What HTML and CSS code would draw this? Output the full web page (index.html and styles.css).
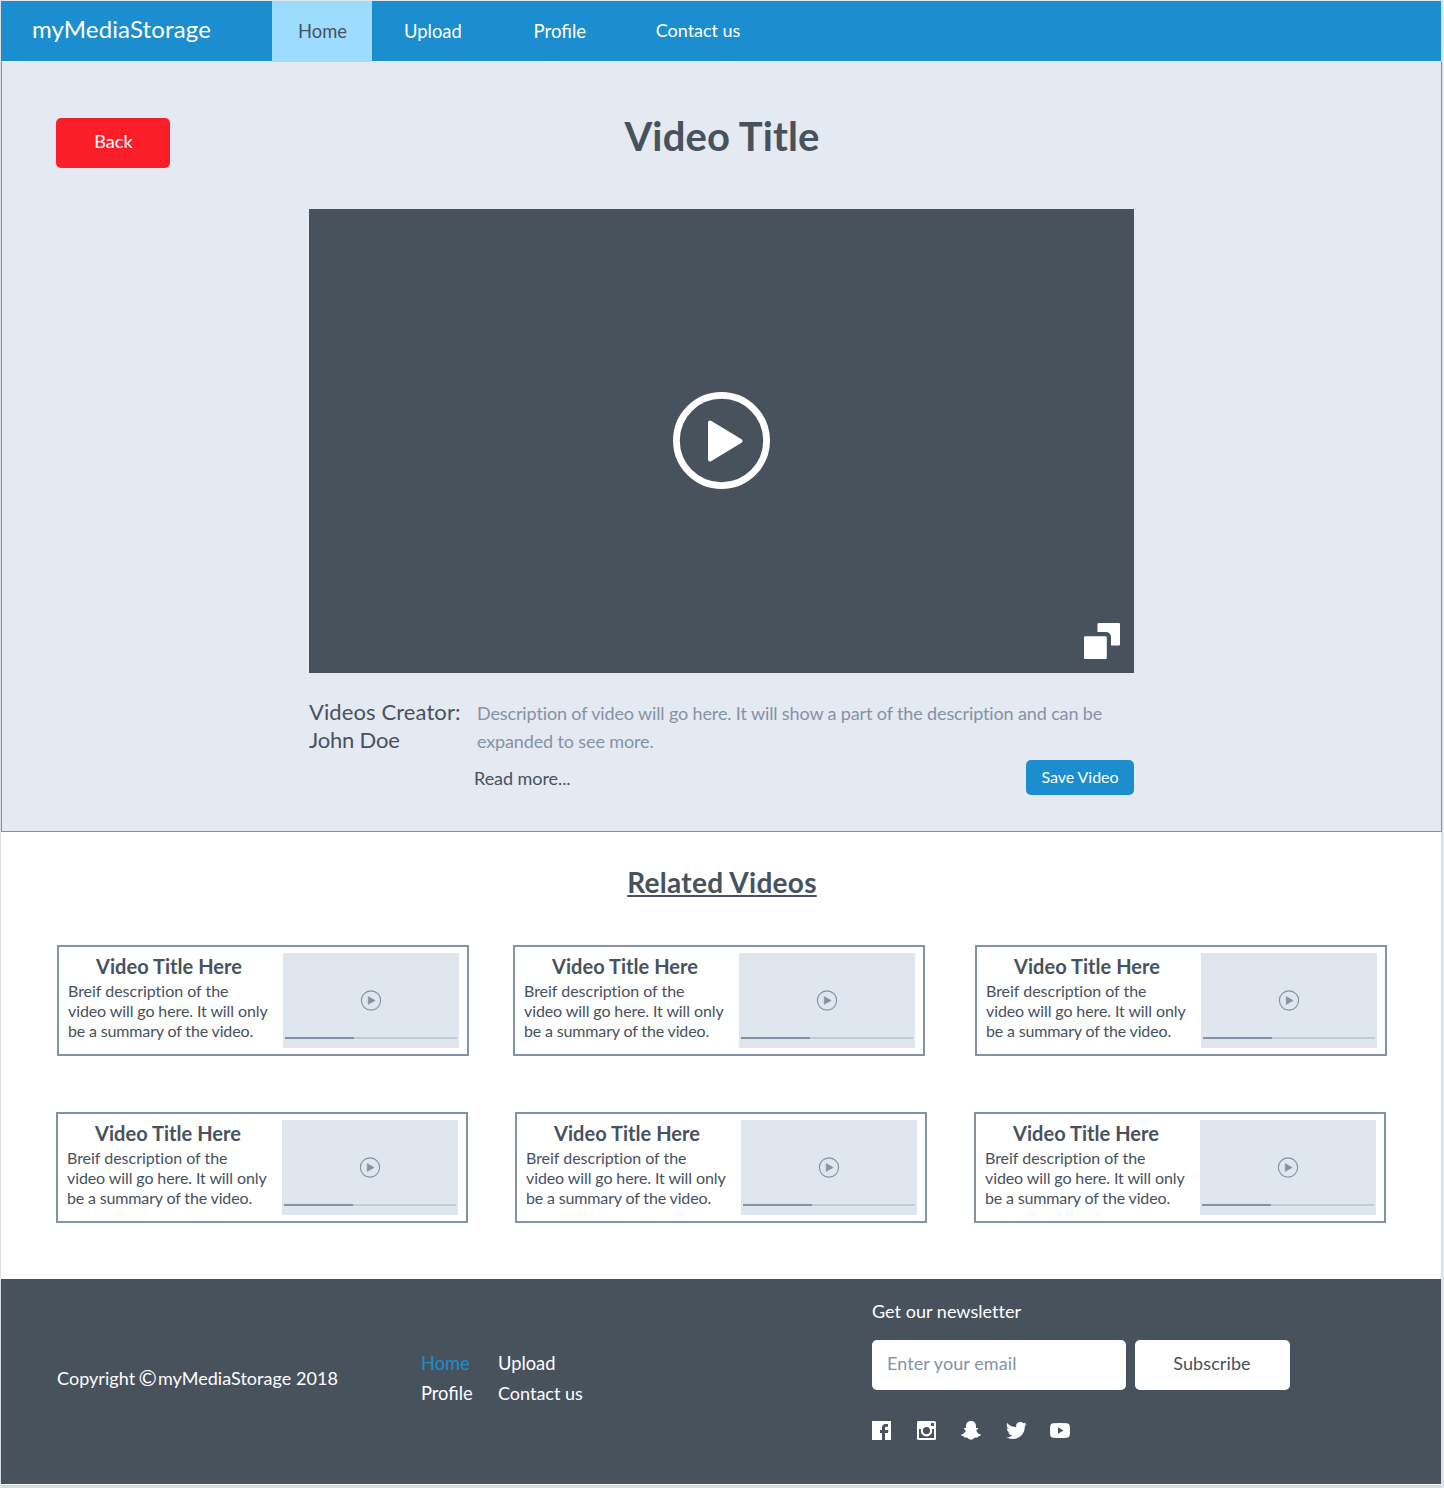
FILE: index.html
```html
<!DOCTYPE html>
<html lang="en">
<head>
<meta charset="utf-8">
<title>myMediaStorage</title>
<link rel="stylesheet" href="styles.css">
</head>
<body>
<svg class="defs" width="0" height="0" aria-hidden="true">
  <symbol id="thumb-play" viewBox="0 0 22 21">
    <circle cx="11" cy="10.500" r="9.600" fill="none" stroke="#8492a6" stroke-width="1.150"/>
    <path d="M8.200 6.500v8l7-4z" fill="#8492a6" stroke="#8492a6" stroke-width=".5" stroke-linejoin="round"/>
  </symbol>
</svg>
<div class="page">
  <header class="topbar">
    <div class="brand">myMediaStorage</div>
    <nav class="tabs">
      <a class="tab tab-active">Home</a>
      <a class="tab">Upload</a>
      <a class="tab tab-profile">Profile</a>
      <a class="tab tab-contact">Contact us</a>
    </nav>
  </header>

  <main>
    <section class="hero">
      <div class="hero-head">
        <button class="back">Back</button>
        <h1>Video Title</h1>
      </div>
      <div class="player">
        <svg class="play" width="97" height="97" viewBox="0 0 97 97">
          <circle cx="48.500" cy="48.500" r="45.100" fill="none" stroke="#fff" stroke-width="6.800"/>
          <path d="M37 30.500v37L67.500 49z" fill="#fff" stroke="#fff" stroke-width="4" stroke-linejoin="round"/>
        </svg>
        <svg class="expand" width="36" height="36" viewBox="0 0 36 36" fill="#fff">
          <path d="M14.800 0H35a1 1 0 0 1 1 1v20.500a1 1 0 0 1-1 1h-8V14a5 5 0 0 0-5-5h-8.500V1.300A1.300 1.300 0 0 1 14.800 0z"/>
          <rect x="0" y="13.200" width="22.800" height="22.800" rx="1.300"/>
        </svg>
      </div>
      <div class="details">
        <p class="creator">Videos Creator:<br><span class="name">John Doe</span></p>
        <div class="about">
          <p class="description">Description of video will go here. It will show a part of the description and can be<br>expanded to see more.</p>
          <div class="actions">
            <a class="more">Read more...</a>
            <button class="save">Save Video</button>
          </div>
        </div>
      </div>
    </section>

    <section class="related">
      <h2>Related Videos</h2>
      <div class="row row-first">
        <article class="card"><div class="card-text"><h3>Video Title Here</h3><p>Breif description of the<br><span class="snug">video will go here. It will only</span><br><span class="snugger">be a summary of the video.</span></p></div><div class="thumb"><svg class="thumb-icon"><use href="#thumb-play"/></svg><div class="track"><div class="progress"></div></div></div></article>
        <article class="card"><div class="card-text"><h3>Video Title Here</h3><p>Breif description of the<br><span class="snug">video will go here. It will only</span><br><span class="snugger">be a summary of the video.</span></p></div><div class="thumb"><svg class="thumb-icon"><use href="#thumb-play"/></svg><div class="track"><div class="progress"></div></div></div></article>
        <article class="card"><div class="card-text"><h3>Video Title Here</h3><p>Breif description of the<br><span class="snug">video will go here. It will only</span><br><span class="snugger">be a summary of the video.</span></p></div><div class="thumb"><svg class="thumb-icon"><use href="#thumb-play"/></svg><div class="track"><div class="progress"></div></div></div></article>
      </div>
      <div class="row row-second">
        <article class="card"><div class="card-text"><h3>Video Title Here</h3><p>Breif description of the<br><span class="snug">video will go here. It will only</span><br><span class="snugger">be a summary of the video.</span></p></div><div class="thumb"><svg class="thumb-icon"><use href="#thumb-play"/></svg><div class="track"><div class="progress"></div></div></div></article>
        <article class="card"><div class="card-text"><h3>Video Title Here</h3><p>Breif description of the<br><span class="snug">video will go here. It will only</span><br><span class="snugger">be a summary of the video.</span></p></div><div class="thumb"><svg class="thumb-icon"><use href="#thumb-play"/></svg><div class="track"><div class="progress"></div></div></div></article>
        <article class="card"><div class="card-text"><h3>Video Title Here</h3><p>Breif description of the<br><span class="snug">video will go here. It will only</span><br><span class="snugger">be a summary of the video.</span></p></div><div class="thumb"><svg class="thumb-icon"><use href="#thumb-play"/></svg><div class="track"><div class="progress"></div></div></div></article>
      </div>
    </section>
  </main>

  <footer class="footer">
    <p class="copyright"><span>Copyright</span><span class="mark">©</span><span>myMediaStorage 2018</span></p>
    <nav class="footer-links">
      <a class="wide current">Home</a>
      <a class="wide">Upload</a>
      <a class="wide">Profile</a>
      <a>Contact us</a>
    </nav>
    <div class="newsletter">
      <p class="newsletter-title">Get our newsletter</p>
      <form class="signup">
        <input class="email" type="email" placeholder="Enter your email">
        <button class="subscribe" type="button">Subscribe</button>
      </form>
      <div class="social">
        <svg width="19" height="19" viewBox="0 0 19 19" fill="#fff"><path d="M0 0h19v19h-6v-7h3l.4-3H13V7.200c0-.9.300-1.400 1.400-1.400h1.600V3.100c-.6-.1-1.300-.1-2.300-.1-2.300 0-3.700 1.300-3.700 3.700V9H8v3h2v7H0z"/></svg>
        <svg width="19" height="19" viewBox="0 0 19 19" fill="#fff"><path fill-rule="evenodd" d="M1.500 0h16A1.500 1.500 0 0 1 19 1.500v16a1.500 1.500 0 0 1-1.500 1.500h-16A1.500 1.500 0 0 1 0 17.500v-16A1.500 1.500 0 0 1 1.500 0zM14.500 2a.5.5 0 0 0-.5.500v2a.5.5 0 0 0 .5.500h2a.5.5 0 0 0 .5-.5v-2a.5.5 0 0 0-.5-.5zM2 8v8.500a.5.5 0 0 0 .5.500h14a.5.5 0 0 0 .5-.5V8h-2q.2.800.2 1.700a5.700 5.700 0 0 1-11.400 0Q3.800 8.800 4 8zM9.500 6a3.600 3.600 0 1 0 0 7.200 3.600 3.600 0 0 0 0-7.200z"/></svg>
        <svg width="20" height="19" viewBox="0 0 20 19" fill="#fff"><path d="M10 0c2.800 0 5 2 5 5v2c.7.200 1.500-.3 2 .2.500.7-.3 1.200-1.300 1.700-.6.300-.4.800 0 1.500.8 1.500 2 2.600 3.700 3 .6.200.8.700.2 1.100-.7.500-1.700.6-2.300.8-.3.300-.1.900-.5 1.100-.7.300-1.900-.2-3 .3-1.200.600-2 1.900-3.800 1.900s-2.600-1.300-3.800-1.900c-1.100-.5-2.300 0-3-.3-.4-.2-.2-.8-.5-1.100-.6-.2-1.600-.3-2.300-.8-.6-.4-.4-.9.200-1.100 1.700-.4 2.900-1.500 3.700-3 .4-.7.600-1.200 0-1.500-1-.5-1.800-1-1.300-1.700.5-.5 1.300 0 2-.2V5c0-3 2.200-5 5-5z"/></svg>
        <svg width="21" height="18" viewBox="0 0 21 18" fill="#fff"><path d="M1.300 1.100C3.300 3.600 6.300 5 10.300 5.200 9.500 2 11.700 0 14.300 0c1.300 0 2.400.500 3.100 1.300.9-.1 1.800-.5 2.700-1-.3.900-.9 1.700-1.700 2.200.9 0 1.700-.3 2.400-.6-.6.900-1.200 1.600-2 2.200C19 10.500 14.800 17 6.600 17c-2.400 0-4.600-.6-6.400-1.900 2.200.2 4.400-.3 6-1.700-1.900-.1-3.300-1.200-3.900-2.900.6.100 1.200.1 1.800-.1C2.100 9.900.8 8.300.8 6.200c.6.400 1.200.5 1.800.5C.8 5.300.2 3 1.300 1.100z"/></svg>
        <svg width="20" height="15" viewBox="0 0 20 15" fill="#fff"><path fill-rule="evenodd" d="M3 .300Q10-.3 17 .300q2.600.200 2.800 2.700.3 4.500 0 9-.2 2.500-2.800 2.700-7 .600-14 0Q.4 14.500.2 12q-.3-4.500 0-9Q.4.500 3 .300zM8 4.300v6.400l5.500-3.200z"/></svg>
      </div>
    </div>
  </footer>
</div>
</body>
</html>
```
FILE: styles.css
```css
* { box-sizing: border-box; }
body {
  margin: 0;
  padding: 1px 3px 4px 1px;
  background: #e9edf5;
  font-family: Lato, sans-serif;
  font-size: 18px;
  color: #47525d;
}
h1, h2, h3, p { margin: 0; }
button, input { font: inherit; border: 0; padding: 0; margin: 0; }
.defs { display: block; position: absolute; }

.page {
  width: 1440px;
  height: 1484px;
  background: #fff;
  box-shadow: 0 2px 3px 1px rgba(71, 82, 93, .16);
}

/* Top bar */
.topbar { display: flex; height: 60px; background: #1c8dce; color: #fff; }
.brand {
  width: 271px;
  padding-left: 31px;
  font-size: 24px;
  line-height: 55px;
  letter-spacing: .13px;
}
.tabs { display: grid; grid-template-columns: 100px 132px 122px auto; height: 61px; }
.tab { line-height: 61px; padding-left: 32px; font-size: 18.400px; }
.tab-active {
  position: relative;
  z-index: 1;
  padding-left: 26px;
  background: #9ddcff;
  color: #47525d;
}
.tab-profile { padding-left: 29.600px; font-size: 18.600px; }
.tab-contact { padding-left: 29.800px; line-height: 59px; font-size: 18px; letter-spacing: -.04px; }

/* Featured video */
.hero {
  width: 1441px;
  height: 771px;
  padding: 56px 307px 0;
  background: #e4e9f2;
  border: 1px solid #8190a5;
  border-top-color: #e4e9f2;
}
.hero-head {
  display: grid;
  grid-template-columns: 253px 1fr 253px;
  margin: 0 -253px;
  height: 91px;
}
.back {
  width: 114px;
  height: 50px;
  padding: 0 0 4px 1px;
  border-radius: 5px;
  background: #fa1e28;
  color: #fff;
  font-size: 18.200px;
}
h1 { padding-left: 1px; text-align: center; font-size: 40px; line-height: 36px; letter-spacing: .13px; }
.player {
  position: relative;
  display: grid;
  place-content: start;
  padding: 183px 0 0 364px;
  width: 825px;
  height: 464px;
  background: #47525d;
}
.play { display: block; }
.expand { position: absolute; right: 14px; bottom: 14px; }
.details { display: grid; grid-template-columns: 168px 657px; padding-top: 25px; }
.creator { font-size: 22px; line-height: 28px; letter-spacing: .1px; }
.name { letter-spacing: -.2px; }
.description { padding-top: 1px; line-height: 28px; letter-spacing: -.13px; color: #8492a6; }
.actions {
  display: flex;
  justify-content: space-between;
  width: 660px;
  margin: 5px 0 0 -3px;
}
.more { line-height: 36px; letter-spacing: -.06px; }
.save {
  width: 108px;
  height: 35px;
  padding-bottom: 2px;
  border-radius: 5px;
  background: #1c8dce;
  color: #fff;
  font-size: 16px;
  letter-spacing: -.06px;
}

/* Related videos */
.related { height: 447px; padding-top: 33px; }
h2 {
  padding-left: 2px;
  text-align: center;
  font-size: 28px;
  line-height: 34px;
  letter-spacing: .27px;
  text-decoration: underline;
  text-decoration-thickness: 2px;
  text-underline-offset: 2px;
  text-decoration-skip-ink: none;
}
.row { display: grid; }
.row-first { grid-template-columns: 456px 462px 412px; margin: 46px 0 0 56px; }
.row-second { grid-template-columns: 459px 459px 412px; margin: 56px 0 0 55px; }
.card {
  display: flex;
  justify-content: space-between;
  width: 412px;
  height: 111px;
  padding: 6px 8px 6px 9px;
  border: 2px solid #8492a6;
}
.card-text { width: 202px; margin-top: -1px; }
h3 { text-align: center; font-size: 20px; line-height: 28px; letter-spacing: .04px; }
.card p {
  padding-top: 1px;
  font-size: 16px;
  line-height: 20px;
  white-space: nowrap;
  letter-spacing: -.02px;
}
.card .snug { letter-spacing: -.1px; }
.card .snugger { letter-spacing: -.15px; }
.thumb {
  display: flex;
  flex-direction: column;
  align-items: center;
  width: 176px;
  height: 95px;
  padding-top: 37px;
  background: #dfe6ee;
}
.thumb-icon { width: 22px; height: 21px; }
.track { width: 172px; height: 2px; margin-top: 26px; background: #c0ccda; }
.progress { width: 69px; height: 2px; background: #8492a6; }

/* Footer */
.footer {
  display: grid;
  grid-template-columns: 364px 451px 1fr;
  height: 205px;
  padding-left: 56px;
  background: #47525d;
  color: #fff;
}
.copyright { display: flex; height: 24px; margin-top: 87px; line-height: 24px; letter-spacing: .04px; }
.mark { width: 19.500px; margin-left: 3.300px; font-size: 22px; }
.footer-links {
  display: grid;
  grid-template-columns: 77px auto;
  grid-auto-rows: 30px;
  justify-content: start;
  margin-top: 69px;
  line-height: 30px;
}
.wide { font-size: 18.300px; }
.current { color: #1c8dce; }
.newsletter-title { padding-top: 21px; line-height: 22px; letter-spacing: .03px; }
.signup { display: flex; gap: 9px; margin-top: 18px; }
.email {
  width: 253.500px;
  height: 50px;
  padding: 0 0 4px 15px;
  border-radius: 5px;
  background: #fff;
  letter-spacing: .08px;
}
.email::placeholder { color: #8492a6; opacity: 1; }
.subscribe {
  width: 155px;
  height: 50px;
  padding-bottom: 4px;
  border-radius: 5px;
  background: #fff;
  color: #47525d;
  letter-spacing: .1px;
}
.social {
  display: grid;
  grid-template-columns: 45px 44px 45px 44px auto;
  align-items: center;
  height: 19px;
  margin-top: 31px;
}
.social svg { display: block; }
```
